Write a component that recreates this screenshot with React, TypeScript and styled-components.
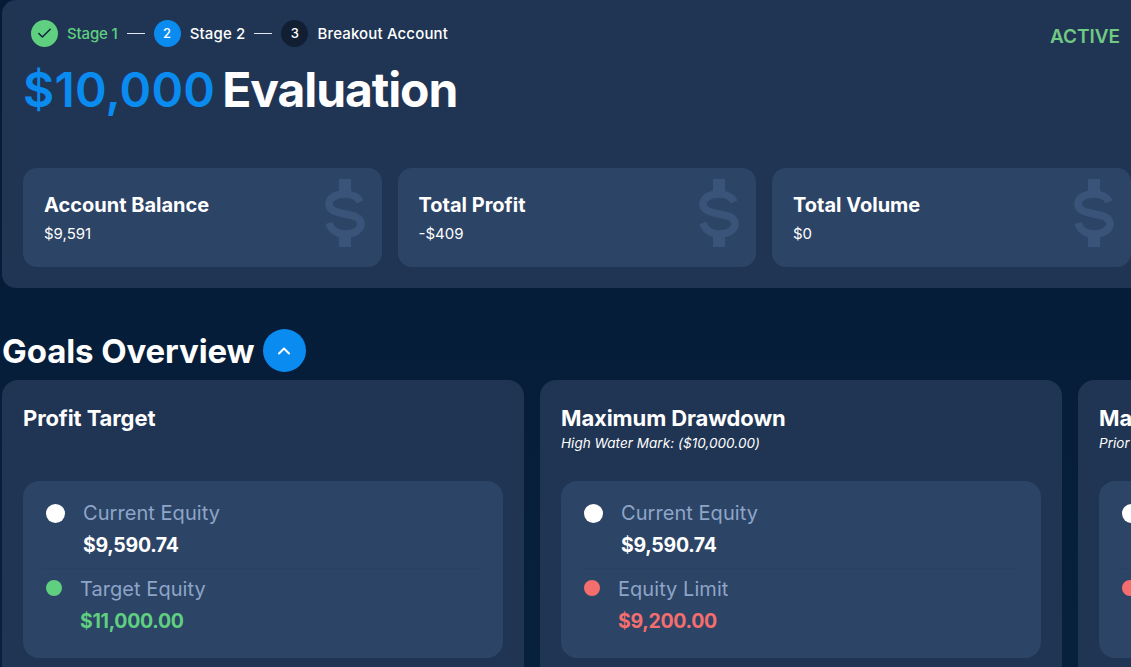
import * as React from 'react'
import styled, { createGlobalStyle } from 'styled-components'
import { Check, ChevronUp } from 'lucide-react'

const colors = {
  page: '#051b36',
  panel: '#203554',
  inner: '#2c4466',
  blue: '#0a8bf0',
  green: '#5fcf80',
  red: '#f56e6e',
  muted: '#8ea5c8',
  icon: '#3a5479',
}

const GlobalStyle = createGlobalStyle`
  html, body {
    margin: 0;
    height: 100%;
    overflow: hidden;
    background: ${colors.page};
  }
  body {
    font-family: Inter, "Noto Sans", sans-serif;
    color: #fff;
  }
`

const Page = styled.main`
  width: 1131px;
  height: 667px;
  overflow: hidden;
  padding-left: 2px;
  box-sizing: border-box;
  background: linear-gradient(180deg, #051b36 0%, #07203c 100%);
`

const HeaderPanel = styled.section`
  width: 1149px;
  height: 288px;
  box-sizing: border-box;
  padding: 19px 21px 0;
  background: ${colors.panel};
  border-radius: 14px;
  position: relative;
`

const Stepper = styled.ol`
  display: flex;
  align-items: center;
  margin: 0 0 0 8px;
  padding: 0;
  list-style: none;
  height: 28px;
`

const Step = styled.li<{ $done?: boolean }>`
  display: flex;
  align-items: center;
  gap: 9px;
  font-size: 15px;
  font-weight: 500;
  letter-spacing: ${p => (p.$done ? '-0.15px' : '0.15px')};
  color: ${p => (p.$done ? colors.green : '#fff')};
`

const StepDot = styled.span<{ $bg: string }>`
  width: 27px;
  height: 27px;
  border-radius: 50%;
  display: flex;
  align-items: center;
  justify-content: center;
  background: ${p => p.$bg};
  font-size: 13px;
  color: #fff;
`

const StepLine = styled.span`
  width: 18px;
  height: 1px;
  margin: 0 9px;
  background: #dfe6f0;
`

const StatusLabel = styled.div`
  position: absolute;
  top: 25px;
  right: 31px;
  font-size: 19px;
  font-weight: 600;
  letter-spacing: -0.05px;
  color: #72c983;
`

const Title = styled.h1`
  margin: 14px 0 0;
  font-size: 48px;
  line-height: 58px;
  font-weight: 700;
  letter-spacing: -1.1px;
`

const TitleAmount = styled.span`
  color: ${colors.blue};
  font-weight: 600;
  letter-spacing: 0.2px;
  margin-right: 7px;
`

const StatRow = styled.div`
  display: grid;
  grid-template-columns: repeat(3, 358.5px);
  gap: 16px;
  margin-top: 49px;
`

const StatCard = styled.div`
  height: 99px;
  box-sizing: border-box;
  padding: 25px 21px 0;
  border-radius: 14px;
  background: ${colors.inner};
  position: relative;
`

const StatTitle = styled.div`
  font-size: 20px;
  line-height: 24px;
  font-weight: 700;
`

const StatValue = styled.div`
  margin-top: 7px;
  font-size: 15px;
  line-height: 20px;
`

const DollarMark = styled.svg`
  position: absolute;
  top: 11px;
  right: 17px;
  width: 40px;
  height: 68px;
  color: ${colors.icon};
`

const SectionHeading = styled.div`
  display: flex;
  align-items: center;
  gap: 8px;
  margin-top: 41px;
  height: 43px;
`

const SectionTitle = styled.h2`
  margin: 0;
  font-size: 33px;
  font-weight: 700;
  letter-spacing: -0.1px;
`

const RoundButton = styled.button`
  width: 43px;
  height: 43px;
  padding: 0;
  border: 0;
  border-radius: 50%;
  background: ${colors.blue};
  color: #fff;
  display: flex;
  align-items: center;
  justify-content: center;
`

const GoalRow = styled.div`
  display: grid;
  grid-template-columns: repeat(3, 522px);
  gap: 16px;
  margin-top: 8px;
`

const GoalCard = styled.article`
  height: 320px;
  box-sizing: border-box;
  padding: 25px 21px 0;
  border-radius: 16px;
  background: ${colors.panel};
`

const GoalTitle = styled.h3`
  margin: 0;
  font-size: 22px;
  line-height: 26px;
  font-weight: 700;
  letter-spacing: -0.1px;
  white-space: nowrap;
`

const GoalNote = styled.div`
  height: 18px;
  margin-top: 3px;
  font-size: 13.5px;
  line-height: 18px;
  font-style: italic;
  letter-spacing: 0.05px;
  white-space: nowrap;
`

const GoalInner = styled.div`
  margin-top: 29px;
  height: 177px;
  box-sizing: border-box;
  padding: 20px 21px 0 19px;
  border-radius: 16px;
  background: ${colors.inner};
`

const Metric = styled.div<{ $divided?: boolean }>`
  display: flex;
  align-items: flex-start;
  gap: 18px;
  padding-left: 4px;
  ${p => p.$divided && `
    border-top: 1px solid #2a4162;
    margin-top: 11px;
    padding-top: 8px;
  `}
`

const MetricDot = styled.span<{ $color: string; $size: number }>`
  flex: none;
  width: ${p => p.$size}px;
  height: ${p => p.$size}px;
  margin-top: 3px;
  border-radius: 50%;
  background: ${p => p.$color};
`

const MetricLabel = styled.div`
  font-size: 20px;
  line-height: 24px;
  letter-spacing: 0.05px;
  color: ${colors.muted};
`

const MetricValue = styled.div<{ $color: string }>`
  margin-top: 8px;
  font-size: 19.5px;
  line-height: 24px;
  font-weight: 700;
  letter-spacing: -0.3px;
  color: ${p => p.$color};
`

function Dollar() {
  return (
    <DollarMark viewBox="0 0 40 68" fill="none" stroke="currentColor">
      <path d="M14 0h12v12H14zM14 58h12v10H14z" fill="currentColor" stroke="none" />
      <path
        d="M35 23C33 18 27 15 20 15C11 15 4 19 4 25C4 31 10 33 20 35C31 37 36 39 36 45C36 51 29 55 20 55C12 55 6 51 4 44"
        strokeWidth="7.5"
      />
    </DollarMark>
  )
}

const stats = [
  { title: 'Account Balance', value: '$9,591' },
  { title: 'Total Profit', value: '-$409' },
  { title: 'Total Volume', value: '$0' },
]

const goals = [
  { title: 'Profit Target', note: '', label: 'Target Equity', amount: '$11,000.00', color: colors.green },
  { title: 'Maximum Drawdown', note: 'High Water Mark: ($10,000.00)', label: 'Equity Limit', amount: '$9,200.00', color: colors.red },
  { title: 'Maximum Daily Loss', note: 'Prior Day Balance: ($10,000.00)', label: 'Equity Limit', amount: '$9,500.00', color: colors.red },
]

export default function App() {
  return (
    <Page>
      <GlobalStyle />
      <HeaderPanel>
        <Stepper>
          <Step $done>
            <StepDot $bg={colors.green}><Check size={17} color="#14263f" strokeWidth={2.2} /></StepDot>
            Stage 1
          </Step>
          <StepLine />
          <Step>
            <StepDot $bg={colors.blue}>2</StepDot>
            Stage 2
          </Step>
          <StepLine />
          <Step>
            <StepDot $bg="#121f33">3</StepDot>
            Breakout Account
          </Step>
        </Stepper>
        <StatusLabel>ACTIVE</StatusLabel>
        <Title><TitleAmount>$10,000</TitleAmount>Evaluation</Title>
        <StatRow>
          {stats.map(s => (
            <StatCard key={s.title}>
              <StatTitle>{s.title}</StatTitle>
              <StatValue>{s.value}</StatValue>
              <Dollar />
            </StatCard>
          ))}
        </StatRow>
      </HeaderPanel>

      <SectionHeading>
        <SectionTitle>Goals Overview</SectionTitle>
        <RoundButton><ChevronUp size={20} strokeWidth={2.4} /></RoundButton>
      </SectionHeading>

      <GoalRow>
        {goals.map(g => (
          <GoalCard key={g.title}>
            <GoalTitle>{g.title}</GoalTitle>
            <GoalNote>{g.note}</GoalNote>
            <GoalInner>
              <Metric>
                <MetricDot $color="#fff" $size={19} />
                <div>
                  <MetricLabel>Current Equity</MetricLabel>
                  <MetricValue $color="#fff">$9,590.74</MetricValue>
                </div>
              </Metric>
              <Metric $divided>
                <MetricDot $color={g.color} $size={16} />
                <div>
                  <MetricLabel>{g.label}</MetricLabel>
                  <MetricValue $color={g.color}>{g.amount}</MetricValue>
                </div>
              </Metric>
            </GoalInner>
          </GoalCard>
        ))}
      </GoalRow>
    </Page>
  )
}
